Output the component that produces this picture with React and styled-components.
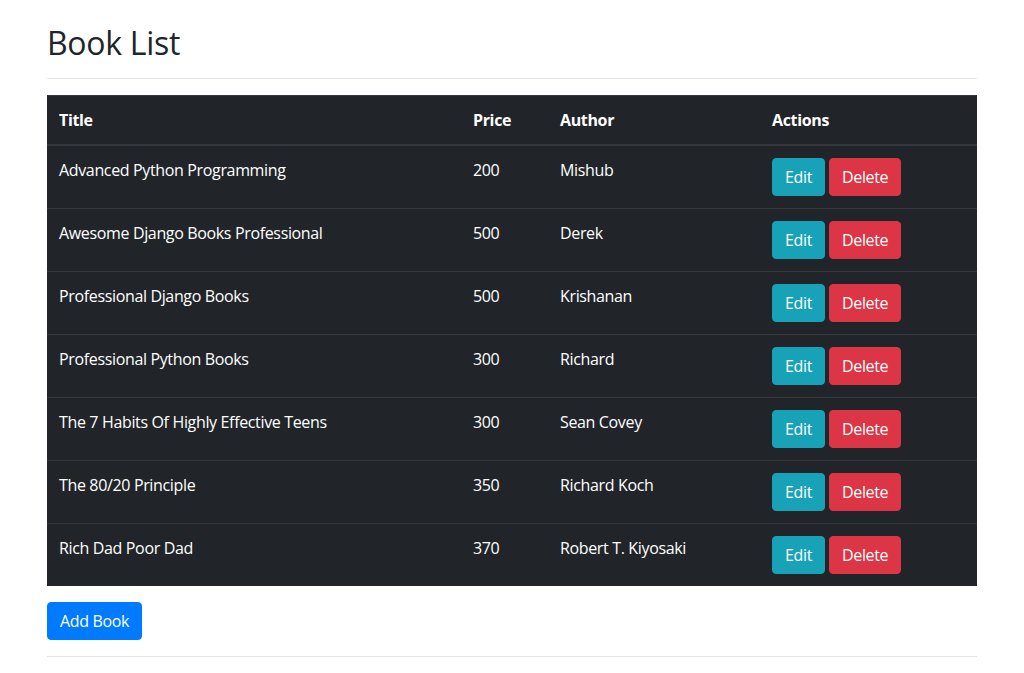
import React from "react";
import styled, { createGlobalStyle } from "styled-components";

const GlobalStyle = createGlobalStyle`
  html, body { margin: 0; padding: 0; background: #fff; }
  body {
    font-family: "Open Sans", "Noto Sans", "Liberation Sans", sans-serif;
    font-size: 16px;
    line-height: 1.5;
    letter-spacing: -0.35px;
    color: #212529;
  }
  * { box-sizing: border-box; }
`;

const Container = styled.div`
  width: 960px;
  margin: 0 auto;
  padding: 24px 15px 0;
`;

const Heading = styled.h2`
  margin: 0 0 8px;
  font-size: 32px;
  font-weight: 500;
  line-height: 1.2;
  letter-spacing: -0.3px;
  color: #212529;
`;

const Rule = styled.hr`
  margin: 16px 0;
  border: 0;
  border-top: 1px solid rgba(0, 0, 0, 0.1);
  height: 0;
`;

const Table = styled.table`
  width: 100%;
  margin-bottom: 16px;
  border-collapse: collapse;
  table-layout: fixed;
  background: #212529;
  color: #fff;
`;

const HeadCell = styled.th`
  padding: 12px;
  text-align: left;
  vertical-align: bottom;
  font-weight: 700;
  border-top: 1px solid #32383e;
  border-bottom: 2px solid #32383e;
  line-height: 24px;
`;

const Cell = styled.td`
  padding: 12px;
  vertical-align: top;
  border-top: 1px solid #32383e;
  line-height: 24px;
`;

const Actions = styled.div`
  display: flex;
  gap: 4px;
`;

const variants = {
  info: "#17a2b8",
  danger: "#dc3545",
  primary: "#007bff",
};

const Button = styled.button`
  display: inline-block;
  padding: 6px 12px;
  font-family: inherit;
  font-size: 16px;
  line-height: 24px;
  letter-spacing: -0.35px;
  font-weight: 400;
  color: #fff;
  background: ${(p) => variants[p.$variant]};
  border: 1px solid ${(p) => variants[p.$variant]};
  border-radius: 4px;
  cursor: pointer;
`;

const books = [
  ["Advanced Python Programming", "200", "Mishub"],
  ["Awesome Django Books Professional", "500", "Derek"],
  ["Professional Django Books", "500", "Krishanan"],
  ["Professional Python Books", "300", "Richard"],
  ["The 7 Habits Of Highly Effective Teens", "300", "Sean Covey"],
  ["The 80/20 Principle", "350", "Richard Koch"],
  ["Rich Dad Poor Dad", "370", "Robert T. Kiyosaki"],
];

export default function App() {
  return (
    <>
      <GlobalStyle />
      <Container>
        <Heading>Book List</Heading>
        <Rule />
        <Table>
          <colgroup>
            <col style={{ width: 414 }} />
            <col style={{ width: 87 }} />
            <col style={{ width: 212 }} />
            <col style={{ width: 217 }} />
          </colgroup>
          <thead>
            <tr>
              <HeadCell>Title</HeadCell>
              <HeadCell>Price</HeadCell>
              <HeadCell>Author</HeadCell>
              <HeadCell>Actions</HeadCell>
            </tr>
          </thead>
          <tbody>
            {books.map(([title, price, author]) => (
              <tr key={title}>
                <Cell>{title}</Cell>
                <Cell>{price}</Cell>
                <Cell>{author}</Cell>
                <Cell>
                  <Actions>
                    <Button $variant="info">Edit</Button>
                    <Button $variant="danger">Delete</Button>
                  </Actions>
                </Cell>
              </tr>
            ))}
          </tbody>
        </Table>
        <Button $variant="primary">Add Book</Button>
        <Rule />
      </Container>
    </>
  );
}
